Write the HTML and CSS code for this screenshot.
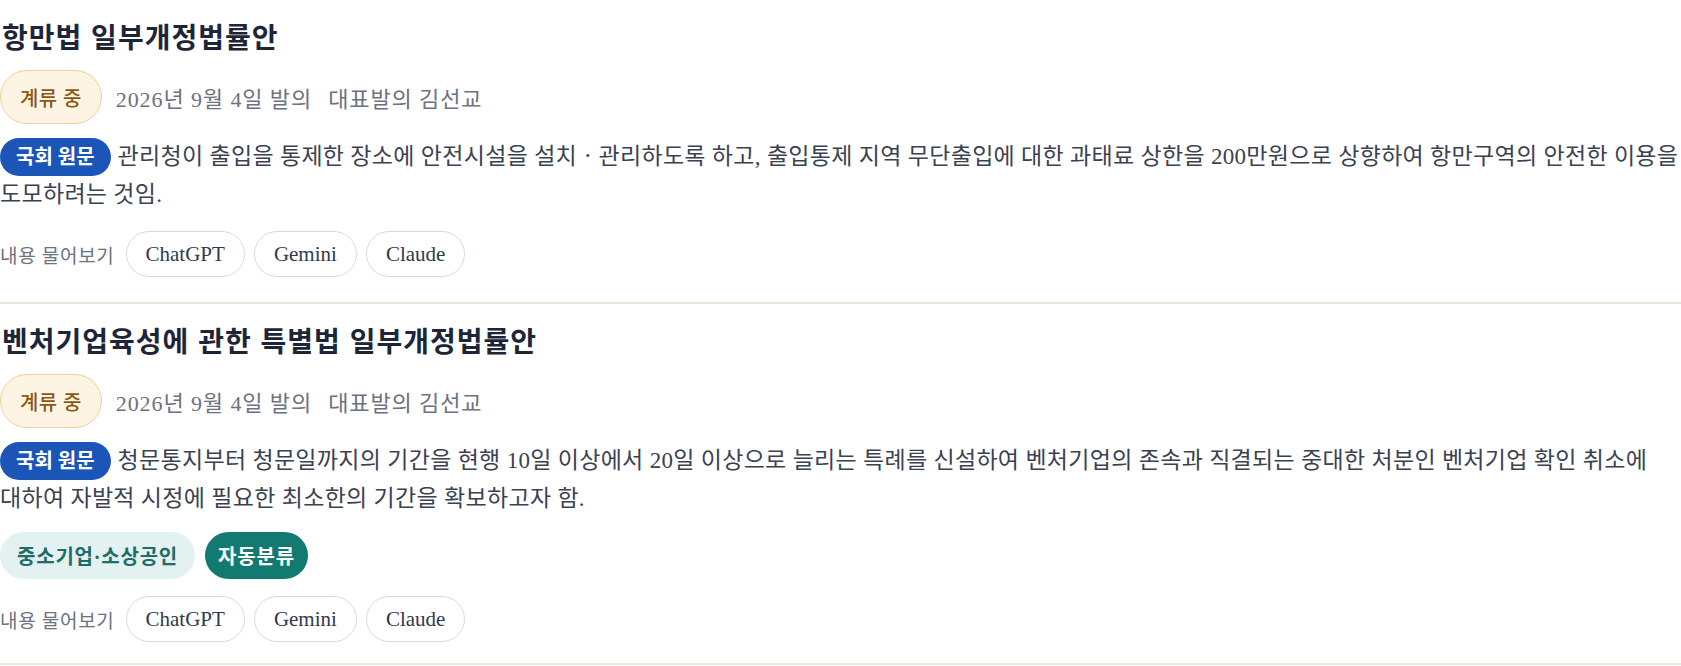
FILE: index.html
```html
<!DOCTYPE html>
<html lang="ko">
<head>
<meta charset="utf-8">
<title>법률안 목록</title>
<link rel="stylesheet" href="styles.css">
</head>
<body>
<main class="list">
  <article class="bill">
    <h2 class="bill-title">항만법 일부개정법률안</h2>
    <div class="meta">
      <span class="status">계류 중</span>
      <span class="date">2026년 9월 4일 발의</span>
      <span class="sponsor">대표발의 김선교</span>
    </div>
    <p class="summary"><span class="badge">국회 원문</span>관리청이 출입을 통제한 장소에 안전시설을 설치ㆍ관리하도록 하고, 출입통제 지역 무단출입에 대한 과태료 상한을 200만원으로 상향하여 항만구역의 안전한 이용을 도모하려는 것임.</p>
    <div class="ask">
      <span class="ask-label">내용 물어보기</span>
      <a class="ask-pill" href="#">ChatGPT</a>
      <a class="ask-pill" href="#">Gemini</a>
      <a class="ask-pill" href="#">Claude</a>
    </div>
  </article>
  <article class="bill">
    <h2 class="bill-title">벤처기업육성에 관한 특별법 일부개정법률안</h2>
    <div class="meta">
      <span class="status">계류 중</span>
      <span class="date">2026년 9월 4일 발의</span>
      <span class="sponsor">대표발의 김선교</span>
    </div>
    <p class="summary"><span class="badge">국회 원문</span>청문통지부터 청문일까지의 기간을 현행 10일 이상에서 20일 이상으로 늘리는 특례를 신설하여 벤처기업의 존속과 직결되는 중대한 처분인 벤처기업 확인 취소에 대하여 자발적 시정에 필요한 최소한의 기간을 확보하고자 함.</p>
    <div class="tags">
      <span class="tag tag-topic">중소기업·소상공인</span>
      <span class="tag tag-auto">자동분류</span>
    </div>
    <div class="ask">
      <span class="ask-label">내용 물어보기</span>
      <a class="ask-pill" href="#">ChatGPT</a>
      <a class="ask-pill" href="#">Gemini</a>
      <a class="ask-pill" href="#">Claude</a>
    </div>
  </article>
</main>
</body>
</html>
```

FILE: styles.css
```css
* { box-sizing: border-box; }

html, body {
  margin: 0;
  padding: 0;
  background: #ffffff;
}

body {
  font-family: "Liberation Serif", "Noto Sans CJK KR", serif;
  color: #3b4252;
  word-break: keep-all;
}

.list {
  display: flex;
  flex-direction: column;
}

.bill {
  display: flex;
  flex-direction: column;
  padding: 16px 0 25px;
  border-bottom: 2px solid #ebe6dd;
}

.bill:last-child {
  padding-bottom: 21px;
}

.bill-title {
  margin: 0;
  font-family: "Noto Sans CJK KR", "Liberation Serif", sans-serif;
  font-size: 28px;
  line-height: 40px;
  font-weight: 600;
  letter-spacing: 1px;
  color: #1d2638;
  padding-left: 2px;
}

.meta {
  display: flex;
  align-items: center;
  gap: 14px;
  margin-top: 14px;
}

.status {
  display: inline-flex;
  align-items: center;
  height: 54px;
  padding: 0 19px;
  border: 1.5px solid #eed09d;
  background: #fef4e3;
  border-radius: 27px;
  color: #8a5a12;
  font-size: 20px;
  font-weight: 500;
  letter-spacing: 0.4px;
}

.date, .sponsor {
  font-size: 22px;
  letter-spacing: 0.9px;
  color: #6b7280;
}

.sponsor { margin-left: 2px; }

.summary {
  margin: 14px 0 0;
  font-size: 23px;
  line-height: 38px;
  letter-spacing: 0.3px;
  color: #3a4252;
}

.badge {
  display: inline-block;
  height: 38px;
  line-height: 38px;
  padding: 0 16px;
  margin-right: 7px;
  border-radius: 19px;
  background: #1a55b7;
  color: #ffffff;
  font-size: 20px;
  font-weight: 700;
  letter-spacing: 0;
  vertical-align: top;
}

.tags {
  display: flex;
  gap: 10px;
  margin-top: 14px;
}

.tag {
  display: inline-flex;
  align-items: center;
  height: 47px;
  padding: 0 17px;
  border-radius: 24px;
  font-size: 20px;
  font-weight: 700;
  letter-spacing: 0.8px;
}

.tag-topic {
  background: #e3f1f0;
  color: #1f6d66;
}

.tag-auto {
  background: #137a72;
  color: #ffffff;
  padding: 0 13px;
}

.ask {
  display: flex;
  align-items: center;
  gap: 9px;
  margin-top: 17px;
}

.ask-label {
  font-size: 19px;
  letter-spacing: 0.7px;
  color: #6b7280;
  margin-right: 2px;
}

.ask-pill {
  display: inline-flex;
  align-items: center;
  height: 46px;
  padding: 0 19px;
  border: 1.5px solid #d6dae1;
  border-radius: 23px;
  color: #2f3a4f;
  font-size: 21px;
  text-decoration: none;
  background: #ffffff;
}
```
